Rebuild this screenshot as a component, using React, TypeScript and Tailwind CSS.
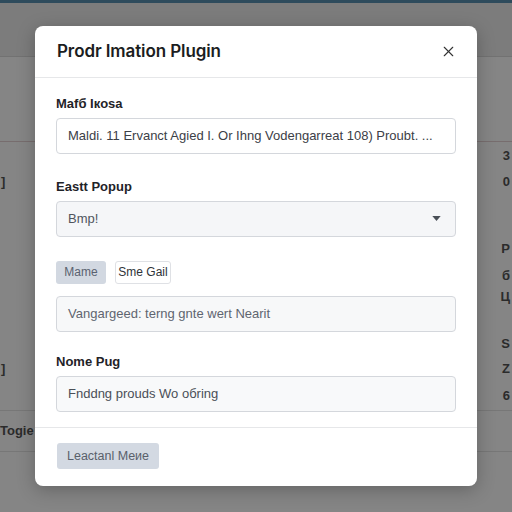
import { X } from 'lucide-react';

const bgRows = [
  { h: 'h-[26px]', left: '', right: '3' },
  { h: 'h-[67px]', left: ']', right: '0' },
  { h: 'h-[27px]', left: '', right: 'P' },
  { h: 'h-[21px]', left: '', right: 'б' },
  { h: 'h-[47px]', left: '', right: 'Ц' },
  { h: 'h-[25px]', left: '', right: 'S' },
  { h: 'h-[27px]', left: ']', right: 'Z' },
  { h: 'h-[23px]', left: '', right: '6' },
];

const Field = ({ label, children }: { label: string; children: React.ReactNode }) => (
  <div>
    <div className="text-[13px] font-semibold leading-[18px] text-[#1f2328] mb-[5px]">{label}</div>
    {children}
  </div>
);

const App = () => {
  return (
    <div className="relative h-[512px] w-[512px] overflow-hidden bg-[#858585] font-['Liberation_Sans',Arial,sans-serif]">
      {/* page behind the overlay */}
      <div className="h-[3px] bg-[#2e4b5c]" />
      <div className="h-[54px] bg-[#7c7c7c] border-b border-[#727272]" />
      <div className="h-[85px] border-b border-[#776d6e]" />
      <div className="pt-[5px]">
        {bgRows.map((r, i) => (
          <div key={i} className={`${r.h} flex items-start justify-between pl-[1px] pr-[2px] text-[13px] leading-[18px] font-bold text-[#2b2b2b]`}>
            <span>{r.left}</span>
            <span>{r.right}</span>
          </div>
        ))}
      </div>
      <div className="border-t border-[#777777] h-[41px] flex items-center text-[13px] font-bold text-[#2b2b2b]">
        <span>Togie</span>
      </div>
      <div className="border-t border-[#777777]" />

      {/* modal */}
      <div className="absolute inset-0 flex items-center justify-center">
        <div className="w-[442px] rounded-[8px] bg-white shadow-[0_4px_18px_rgba(0,0,0,0.25)]">
          <div className="h-[52px] flex items-center justify-between pl-[22px] pr-[20px] border-b border-[#e6e7e9]">
            <h2 className="font-['Inter',sans-serif] text-[17px] font-semibold text-[#1b1d21] tracking-[-0.1px]">Prodr Imation Plugin</h2>
            <X size={17} strokeWidth={1.6} className="text-[#333]" />
          </div>

          <div className="px-[21px] pt-[17px] pb-[15px] flex flex-col">
            <Field label="Mafб Iкosa">
              <div className="h-[36px] rounded-[4px] border border-[#d4d7dc] bg-white px-[11px] flex items-center text-[13px] text-[#3c4047] whitespace-nowrap overflow-hidden">
                Maldi. 11 Ervanct Agied I. Or Ihng Vodengarreat 108) Proubt. ...
              </div>
            </Field>

            <div className="mt-[24px]">
              <Field label="Eastt Popup">
                <div className="h-[36px] rounded-[4px] border border-[#d4d7dc] bg-[#f5f6f8] pl-[11px] pr-[14px] flex items-center justify-between text-[13px] text-[#50555d]">
                  <span>Bmp!</span>
                  <svg width="9" height="5" viewBox="0 0 10 6"><path d="M0 0h10L5 6z" fill="#4a4f57" /></svg>
                </div>
              </Field>
            </div>

            <div className="mt-[24px] flex gap-[9px]">
              <button className="h-[23px] w-[50px] rounded-[3px] bg-[#d2d8e1] text-[12px] text-[#5a6270]">Mame</button>
              <button className="h-[23px] w-[56px] rounded-[3px] border border-[#dfe1e5] bg-white text-[12px] text-[#2f3338]">Sme Gail</button>
            </div>

            <div className="mt-[12px] h-[36px] rounded-[4px] border border-[#d4d7dc] bg-[#f7f8f9] px-[11px] flex items-center text-[13px] text-[#5f6570]">
              Vangargeed: terng gnte wert Nearit
            </div>

            <div className="mt-[21px]">
              <Field label="Nome Pug">
                <div className="h-[36px] rounded-[4px] border border-[#d4d7dc] bg-[#f8f9fa] px-[11px] flex items-center text-[13px] text-[#4a4f57]">
                  Fnddng prouds Wo oбring
                </div>
              </Field>
            </div>
          </div>

          <div className="border-t border-[#e6e7e9] px-[22px] pt-[15px] pb-[17px]">
            <button className="h-[26px] w-[102px] rounded-[3px] bg-[#d3d9e2] text-[12.5px] text-[#59606b]">Leactanl Meие</button>
          </div>
        </div>
      </div>
    </div>
  );
};

export default App;
